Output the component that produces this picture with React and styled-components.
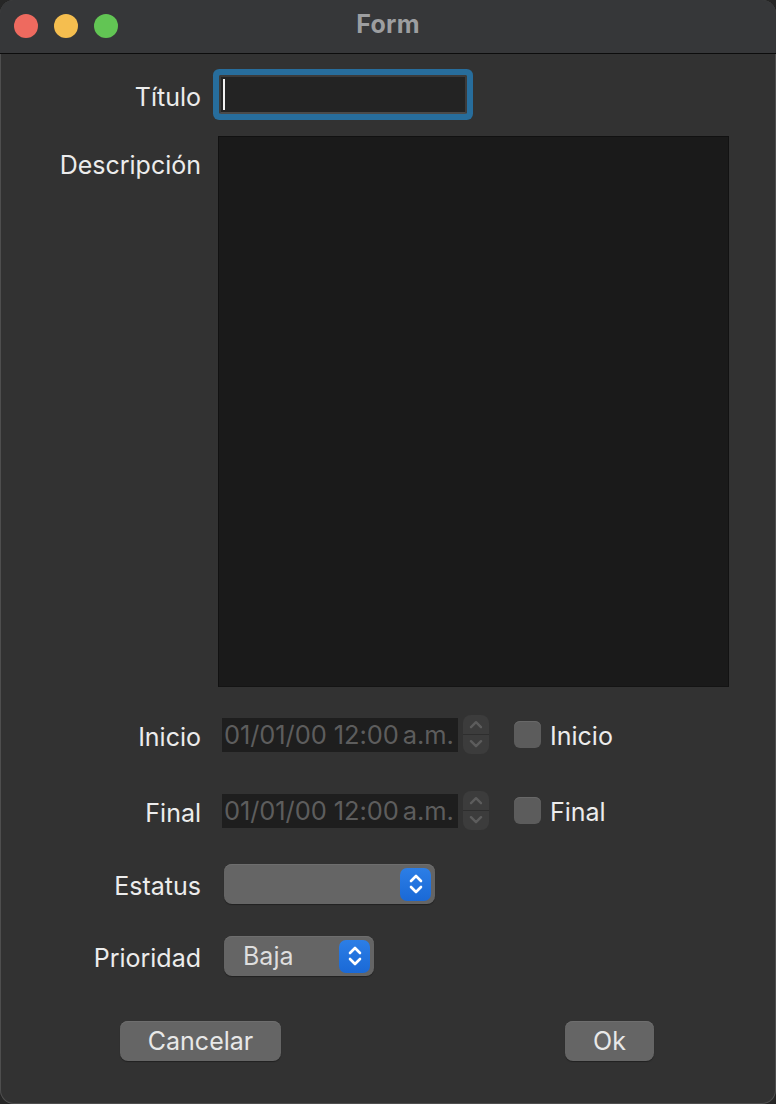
import React from "react";
import styled, { createGlobalStyle } from "styled-components";

const Global = createGlobalStyle`
  html, body { margin: 0; padding: 0; background: #262626; }
  body { font-family: Inter, "Noto Sans", sans-serif; }
  * { box-sizing: border-box; }
`;

const Window = styled.div`
  width: 776px;
  height: 1104px;
  background: #323232;
  border-radius: 14px;
  overflow: hidden;
  display: flex;
  flex-direction: column;
  box-shadow: inset 0 0 0 1px #4e4e4e;
  position: relative;
`;

const TitleBar = styled.div`
  height: 54px;
  flex: none;
  background: #363739;
  border-bottom: 1px solid #0c0c0c;
  display: flex;
  align-items: center;
  position: relative;
  padding-left: 14px;
  gap: 16px;
`;

const Light = styled.span`
  width: 24px;
  height: 24px;
  border-radius: 50%;
  background: ${(p) => p.$c};
  margin-top: -2px;
`;

const Title = styled.div`
  position: absolute;
  left: 0;
  right: 0;
  top: 9px;
  text-align: center;
  font-weight: 700;
  font-size: 25px;
  color: #9d9ea0;
  letter-spacing: 0.3px;
`;

const Body = styled.div`
  flex: 1;
  display: flex;
  flex-direction: column;
  padding-top: 21px;
`;

const Row = styled.div`
  display: grid;
  grid-template-columns: 201px 1fr;
  column-gap: 17px;
  align-items: ${(p) => p.$align || "center"};
  margin-top: ${(p) => p.$mt || 0}px;
`;

const Label = styled.div`
  text-align: right;
  font-size: 25px;
  color: #ececec;
  padding-top: ${(p) => p.$pt || 0}px;
  transform: translateY(${(p) => p.$dy || 0}px);
`;

const TextField = styled.div`
  margin-left: 1px;
  width: 248px;
  height: 39px;
  background: #232323;
  border: 2px solid #3b3b3b;
  border-bottom-color: #4a4a4a;
  box-shadow: 0 0 0 6px #276d9c;
  border-radius: 2px;
  display: flex;
  align-items: center;
  padding-left: 2px;
`;

const Caret = styled.span`
  width: 2px;
  height: 31px;
  background: #f0f0f0;
`;

const TextArea = styled.div`
  width: 511px;
  height: 551px;
  background: #1a1a1a;
  border: 1px solid #111111;
  border-right-color: #121212;
  border-bottom-color: #141414;
`;

const ControlLine = styled.div`
  display: flex;
  align-items: center;
`;

const DateField = styled.div`
  margin-left: 4px;
  width: 236px;
  height: 34px;
  background: #1e1e1e;
  display: flex;
  align-items: center;
  padding-left: 2px;
  font-size: 25.5px;
  color: #5d5d5d;
  white-space: nowrap;
  letter-spacing: -0.1px;
  overflow: hidden;
`;

const Ampm = styled.span`
  margin-left: 4px;
`;

const Stepper = styled.div`
  margin-left: 5px;
  width: 26px;
  height: 39px;
  border-radius: 8px;
  background: #3c3c3c;
  display: flex;
  flex-direction: column;
  overflow: hidden;
`;

const StepHalf = styled.div`
  flex: 1;
  display: flex;
  align-items: center;
  justify-content: center;
  border-top: ${(p) => (p.$bottom ? "1px solid #2e2e2e" : "none")};
`;

const Check = styled.span`
  margin-left: 25px;
  width: 27px;
  height: 27px;
  border-radius: 6px;
  background: #5c5c5c;
  box-shadow: inset 0 1px 0 #686868;
`;

const CheckLabel = styled.span`
  margin-left: 9px;
  font-size: 25px;
  color: #ececec;
  transform: translateY(1px);
`;

const Select = styled.div`
  margin-left: 6px;
  width: ${(p) => p.$w}px;
  height: 40px;
  border-radius: 8px;
  background: #656565;
  box-shadow: inset 0 1px 0 #6e6e6e, 0 1px 1px rgba(0, 0, 0, 0.35);
  display: flex;
  align-items: center;
  justify-content: space-between;
  padding: 0 4px 0 19px;
  font-size: 25px;
  color: #dedede;
`;

const BlueBtn = styled.span`
  width: 31px;
  height: 33px;
  border-radius: 7px;
  background: linear-gradient(#2c7ee6, #1a69d6);
  display: flex;
  align-items: center;
  justify-content: center;
`;

const Buttons = styled.div`
  display: flex;
  justify-content: space-between;
  padding: 0 122px 0 120px;
  margin-top: 45px;
`;

const Button = styled.button`
  width: ${(p) => p.$w}px;
  height: 40px;
  border: none;
  border-radius: 8px;
  background: #656565;
  box-shadow: inset 0 1px 0 #6e6e6e, 0 1px 1px rgba(0, 0, 0, 0.35);
  font-family: Inter, "Noto Sans", sans-serif;
  font-size: 25px;
  color: #e8e8e8;
  padding: 0;
`;

const Chevron = ({ up, color, w = 14, sw = 2.4 }) => (
  <svg width={w} height={w * 0.6} viewBox="0 0 14 8">
    <path
      d={up ? "M2 7 L7 2 L12 7" : "M2 1 L7 6 L12 1"}
      fill="none"
      stroke={color}
      strokeWidth={sw}
      strokeLinecap="round"
      strokeLinejoin="round"
    />
  </svg>
);

const UpDown = () => (
  <svg width="16" height="22" viewBox="0 0 16 22">
    <path d="M3 8 L8 3 L13 8" fill="none" stroke="#fff" strokeWidth="2.6" strokeLinecap="round" strokeLinejoin="round" />
    <path d="M3 14 L8 19 L13 14" fill="none" stroke="#fff" strokeWidth="2.6" strokeLinecap="round" strokeLinejoin="round" />
  </svg>
);

const DateRow = ({ label, mt }) => (
  <Row $mt={mt}>
    <Label $dy={2}>{label}</Label>
    <ControlLine>
      <DateField>
        01/01/00 12:00<Ampm>a.m.</Ampm>
      </DateField>
      <Stepper>
        <StepHalf>
          <Chevron up color="#5c5c5c" />
        </StepHalf>
        <StepHalf $bottom>
          <Chevron color="#5c5c5c" />
        </StepHalf>
      </Stepper>
      <Check />
      <CheckLabel>{label}</CheckLabel>
    </ControlLine>
  </Row>
);

export default function App() {
  return (
    <>
      <Global />
      <Window>
        <TitleBar>
          <Light $c="#ee6a5f" />
          <Light $c="#f5be4f" />
          <Light $c="#62c554" />
          <Title>Form</Title>
        </TitleBar>
        <Body>
          <Row>
            <Label $dy={2}>Título</Label>
            <TextField>
              <Caret />
            </TextField>
          </Row>
          <Row $mt={22} $align="start">
            <Label $pt={14}>Descripción</Label>
            <TextArea />
          </Row>
          <DateRow label="Inicio" mt={28} />
          <DateRow label="Final" mt={37} />
          <Row $mt={34}>
            <Label $dy={2}>Estatus</Label>
            <ControlLine>
              <Select $w={211}>
                <span />
                <BlueBtn>
                  <UpDown />
                </BlueBtn>
              </Select>
            </ControlLine>
          </Row>
          <Row $mt={32}>
            <Label $dy={2}>Prioridad</Label>
            <ControlLine>
              <Select $w={150}>
                <span>Baja</span>
                <BlueBtn>
                  <UpDown />
                </BlueBtn>
              </Select>
            </ControlLine>
          </Row>
          <Buttons>
            <Button $w={161}>Cancelar</Button>
            <Button $w={89}>Ok</Button>
          </Buttons>
        </Body>
      </Window>
    </>
  );
}
